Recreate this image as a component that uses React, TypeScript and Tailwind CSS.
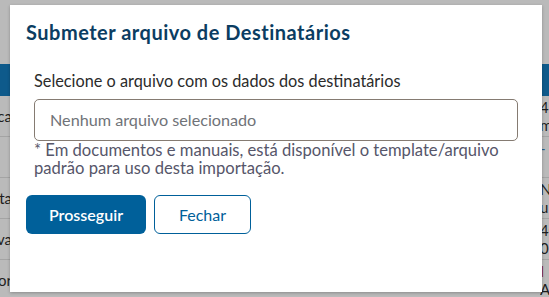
import React from "react";

const rows = [
  { left: "Justifica", right: ["48", "m"], rightTop: false },
  { left: "", right: ["- -"], rightTop: true, blue: true },
  { left: "Digita", right: ["N°", "u"], rightTop: false },
  { left: "Ativa", right: ["40", "0"], rightTop: false },
  { left: "Valor", right: ["I", "A"], rightTop: true, red: true },
];

export default function App() {
  return (
    <div className="relative h-[297px] w-[549px] overflow-hidden bg-[#bababa] font-['Lato',sans-serif]">
      {/* dimmed page behind */}
      <div className="pt-[64px]">
        <div className="h-[32px] bg-[#0e5a8b]" />
        {rows.map((r, i) => (
          <div
            key={i}
            className="flex h-[41px] border-b border-[#a4a4a4] text-[15px] leading-[18px] text-[#1e1e1e]"
          >
            <div className="flex w-[12px] items-center justify-end overflow-hidden whitespace-nowrap">
              {r.left}
            </div>
            <div className="flex-1" />
            <div
              className={
                "flex w-[9px] flex-col overflow-hidden whitespace-nowrap " +
                (r.rightTop ? "justify-start pt-[2px]" : "justify-center")
              }
            >
              {r.right.map((t, j) => (
                <span
                  key={j}
                  className={
                    r.red && j === 0
                      ? "text-[#8a1f1f]"
                      : r.blue
                      ? "text-[#2a5f8c]"
                      : ""
                  }
                >
                  {t}
                </span>
              ))}
            </div>
          </div>
        ))}
      </div>

      {/* modal */}
      <div className="absolute left-[10px] top-[5px] h-[287px] w-[532px] bg-white shadow-[0_1px_3px_rgba(0,0,0,0.25)]">
        <div className="pl-[16px] pt-[15px]">
          <h2 className="text-[20px] font-bold leading-[24px] tracking-[0.5px] text-[#0b3d62]">
            Submeter arquivo de Destinatários
          </h2>
        </div>
        <div className="px-[24px] pt-[25px]">
          <label className="block text-[16.3px] leading-[24px] text-[#2b2b2b]">
            Selecione o arquivo com os dados dos destinatários
          </label>
          <div className="mt-[6px] flex h-[42px] items-center rounded-[5px] border border-[#857b72] pl-[15px] text-[16.2px] text-[#707378]">
            Nenhum arquivo selecionado
          </div>
          <p className="text-[16.6px] leading-[18px] text-[#56566a]">
            * Em documentos e manuais, está disponível o template/arquivo padrão para uso desta importação.
          </p>
        </div>
        <div className="mt-[18px] flex gap-[8px] pl-[16px]">
          <button className="h-[39px] w-[120px] rounded-[6px] bg-[#00609a] text-[16px] font-semibold text-white">
            Prosseguir
          </button>
          <button className="h-[39px] w-[97px] rounded-[6px] border border-[#00609a] bg-white text-[16px] text-[#00609a]">
            Fechar
          </button>
        </div>
      </div>
    </div>
  );
}
